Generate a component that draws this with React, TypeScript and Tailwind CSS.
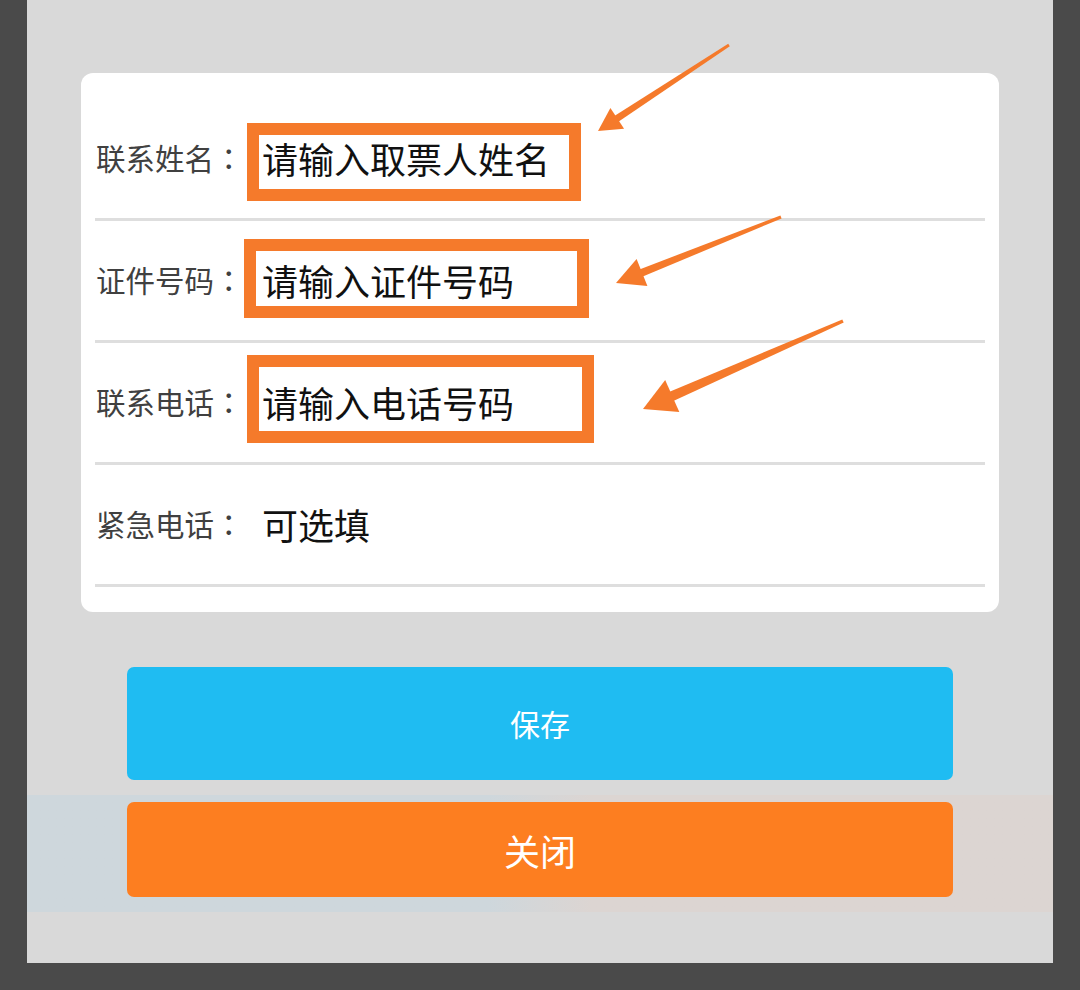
type Row = {
  label: string;
  value: string;
};

const rows: Row[] = [
  { label: "联系姓名", value: "请输入取票人姓名" },
  { label: "证件号码", value: "请输入证件号码" },
  { label: "联系电话", value: "请输入电话号码" },
  { label: "紧急电话", value: "可选填" },
];

type Pt = [number, number];

type Arrow = {
  tail: Pt;
  tip: Pt;
  headLen: number;
  headHalf: number;
  tailWidth: number;
  baseWidth: number;
};

const arrows: Arrow[] = [
  { tail: [729, 45], tip: [598, 131], headLen: 23, headHalf: 12.5, tailWidth: 3, baseWidth: 7 },
  { tail: [781, 217], tip: [616, 283], headLen: 28, headHalf: 14.5, tailWidth: 3, baseWidth: 8 },
  { tail: [843, 321], tip: [643, 409], headLen: 32, headHalf: 17.5, tailWidth: 3.5, baseWidth: 10 },
];

// annotation boxes, stroke is centred on the rect edge
const boxes = [
  { x: 253, y: 129, w: 322, h: 66 },
  { x: 250, y: 245, w: 333, h: 67 },
  { x: 253, y: 361, w: 335, h: 76 },
];

function arrowPoints(a: Arrow) {
  const dx = a.tail[0] - a.tip[0];
  const dy = a.tail[1] - a.tip[1];
  const len = Math.hypot(dx, dy);
  const ux = dx / len;
  const uy = dy / len;
  const px = -uy;
  const py = ux;
  const bx = a.tip[0] + ux * a.headLen;
  const by = a.tip[1] + uy * a.headLen;
  const sx = a.tip[0] + ux * (a.headLen - 4);
  const sy = a.tip[1] + uy * (a.headLen - 4);

  const head = [
    a.tip,
    [bx + px * a.headHalf, by + py * a.headHalf],
    [bx - px * a.headHalf, by - py * a.headHalf],
  ];
  const shaft = [
    [sx + (px * a.baseWidth) / 2, sy + (py * a.baseWidth) / 2],
    [a.tail[0] + (px * a.tailWidth) / 2, a.tail[1] + (py * a.tailWidth) / 2],
    [a.tail[0] - (px * a.tailWidth) / 2, a.tail[1] - (py * a.tailWidth) / 2],
    [sx - (px * a.baseWidth) / 2, sy - (py * a.baseWidth) / 2],
  ];

  const fmt = (pts: number[][]) => pts.map((p) => `${p[0].toFixed(1)},${p[1].toFixed(1)}`).join(" ");
  return { head: fmt(head), shaft: fmt(shaft) };
}

function Annotations() {
  return (
    <svg
      className="pointer-events-none absolute left-0 top-0"
      width={1080}
      height={990}
      viewBox="0 0 1080 990"
    >
      {boxes.map((b, i) => (
        <rect key={i} x={b.x} y={b.y} width={b.w} height={b.h} fill="none" stroke="#f57a2b" strokeWidth={12} />
      ))}
      {arrows.map((a, i) => {
        const p = arrowPoints(a);
        return (
          <g key={i} fill="#f57a2b">
            <polygon points={p.shaft} />
            <polygon points={p.head} />
          </g>
        );
      })}
    </svg>
  );
}

export default function App() {
  return (
    <div className="relative h-[990px] w-[1080px] overflow-hidden bg-[#4a4a4a] font-['Noto_Sans_CJK_SC','Noto_Sans',sans-serif]">
      <div className="ml-[27px] h-[963px] w-[1026px] bg-[#d9d9d9] pt-[73px]">
        <div className="ml-[54px] w-[918px] rounded-[12px] bg-white px-[14px] pb-[25px] pt-[26px]">
          {rows.map((row) => (
            <div
              key={row.label}
              className="flex h-[122px] items-center border-b-[3px] border-[#dedede] pb-[2px]"
            >
              <span className="flex w-[167px] pl-[1px] text-[29.5px] leading-none text-[#404040]">
                {row.label}
                <span className="font-['Noto_Sans_CJK_JP',sans-serif]">：</span>
              </span>
              <span className="text-[36px] leading-none text-[#111111]">{row.value}</span>
            </div>
          ))}
        </div>

        <div className="mt-[55px] px-[100px]">
          <button
            type="button"
            className="flex h-[113px] w-full items-center justify-center rounded-[7px] bg-[#1fbcf2] text-[30px] text-white"
          >
            保存
          </button>
        </div>

        <div className="mt-[15px] bg-linear-to-r from-[#ced7dc] from-45% to-[#dcd5d2] to-55% px-[100px] pb-[15px] pt-[7px]">
          <button
            type="button"
            className="flex h-[95px] w-full items-center justify-center rounded-[7px] bg-[#fd7e20] text-[36px] text-white"
          >
            关闭
          </button>
        </div>
      </div>

      <Annotations />
    </div>
  );
}
